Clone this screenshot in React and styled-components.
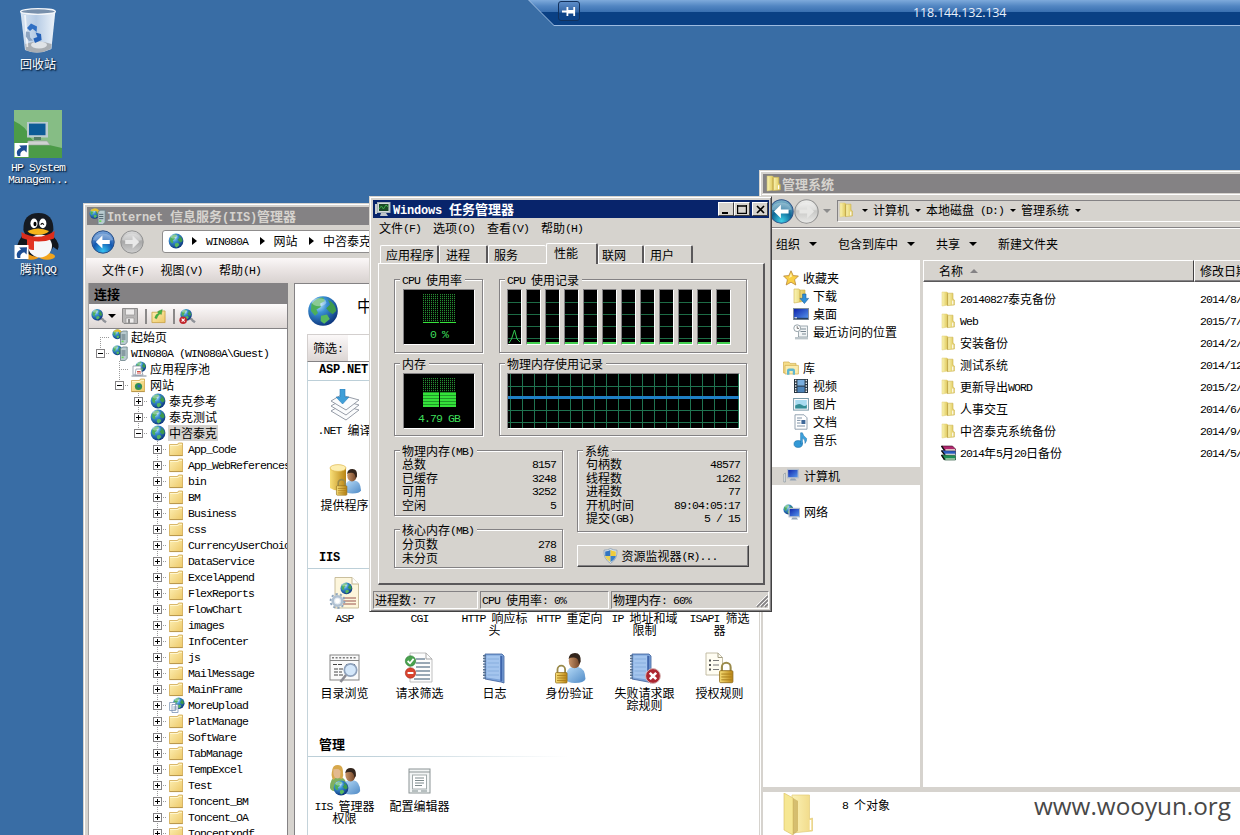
import React from "react";
import styled, { createGlobalStyle } from "styled-components";

const FACE = "#d6d3ce";
const GRAY = "#848284";
const CJK = '"Noto Sans CJK SC", sans-serif';

const Global = createGlobalStyle`
  *, *::before, *::after { box-sizing: border-box; }
  html, body { margin: 0; padding: 0; overflow: hidden; }
  body { font: 12px/12px ${CJK}; color: #000; }
  svg { display: block; flex: none; }
`;

/* ---------- text: half-width runs advance 6px, full-width glyphs 12px ---------- */
const Line = styled.span`
  display: block;
  white-space: pre;
  font-size: ${(p) => (p.$bold ? 13 : 12)}px;
  font-weight: ${(p) => (p.$bold ? 700 : 400)};
  line-height: 12px;
`;
const Half = styled.span`
  font-family: "Liberation Mono", monospace;
  font-size: ${(p) => (p.$bold ? 12 : 11.5)}px;
  line-height: 0;
  vertical-align: ${(p) => (p.$bold ? 0 : 1)}px;
  letter-spacing: ${(p) => (p.$bold ? -0.2 : -0.9)}px;
`;
function T({ children, bold }) {
  const parts = String(children).split(/([\x20-\x7e]+)/).filter(Boolean);
  return (
    <Line $bold={bold}>
      {parts.map((p, i) =>
        /^[\x20-\x7e]/.test(p) ? <Half key={i} $bold={bold}>{p}</Half> : p
      )}
    </Line>
  );
}

/* ---------- icons ---------- */
function Defs() {
  return (
    <svg width="0" height="0" style={{ position: "absolute" }}>
      <defs>
        <radialGradient id="sea" cx="35%" cy="28%" r="80%">
          <stop offset="0" stopColor="#c4ecff" />
          <stop offset=".35" stopColor="#3a90d4" />
          <stop offset="1" stopColor="#072c74" />
        </radialGradient>
        <linearGradient id="fold" x1="0" x2="1" y1="0" y2="1">
          <stop offset="0" stopColor="#fdf0b4" />
          <stop offset="1" stopColor="#edc868" />
        </linearGradient>
        <linearGradient id="fold2" x1="0" x2="1">
          <stop offset="0" stopColor="#fbf5b4" />
          <stop offset="1" stopColor="#dcc455" />
        </linearGradient>
        <linearGradient id="big" x1="0" x2="1">
          <stop offset="0" stopColor="#fbf2b6" />
          <stop offset="1" stopColor="#f0d885" />
        </linearGradient>
        <linearGradient id="gold" x1="0" x2="1">
          <stop offset="0" stopColor="#f8df78" />
          <stop offset="1" stopColor="#b98413" />
        </linearGradient>
        <linearGradient id="blueBody" x1="0" x2="1" y2="1">
          <stop offset="0" stopColor="#b8dcf8" />
          <stop offset="1" stopColor="#4f8ac6" />
        </linearGradient>
        <linearGradient id="skin" x1="0" x2="1">
          <stop offset="0" stopColor="#c99468" />
          <stop offset="1" stopColor="#6e4226" />
        </linearGradient>
        <linearGradient id="glass" x1="0" x2="1">
          <stop offset="0" stopColor="#dfeaf6" />
          <stop offset=".45" stopColor="#bcd0e8" />
          <stop offset="1" stopColor="#f6fafe" />
        </linearGradient>
        <radialGradient id="btnBlue" cx="50%" cy="90%" r="90%">
          <stop offset="0" stopColor="#35c3f2" />
          <stop offset=".5" stopColor="#1458b0" />
          <stop offset="1" stopColor="#7ea8dc" />
        </radialGradient>
        <radialGradient id="btnTeal" cx="50%" cy="90%" r="90%">
          <stop offset="0" stopColor="#3fd0e8" />
          <stop offset=".5" stopColor="#0f6695" />
          <stop offset="1" stopColor="#84b6cc" />
        </radialGradient>
        <linearGradient id="btnGray" x2="0" y2="1">
          <stop offset="0" stopColor="#dcdcdc" />
          <stop offset=".5" stopColor="#a9a9a9" />
          <stop offset="1" stopColor="#cfcfcf" />
        </linearGradient>
        <linearGradient id="btnPale" x2="0" y2="1">
          <stop offset="0" stopColor="#f1f1ef" />
          <stop offset=".5" stopColor="#c9c9c7" />
          <stop offset="1" stopColor="#e9e9e7" />
        </linearGradient>
        <linearGradient id="screen" x2="1" y2="1">
          <stop offset="0" stopColor="#0a1fa8" />
          <stop offset="1" stopColor="#5a9cf0" />
        </linearGradient>
      </defs>
    </svg>
  );
}
const GlobeArt = () => (
  <>
    <circle cx="8" cy="8" r="7.4" fill="url(#sea)" />
    <path d="M2.2 4.5Q4.5 1.3 8 1.2L9 3 6.6 4.2 6.9 6 4.7 7.3 5.5 9 4 10.4 2 8Z" fill="#4cae5a" />
    <path d="M10.5 2.2Q14.4 4.5 14.6 8L12.8 9.6 11 8.2 9.6 6.6 11.6 4.8Z" fill="#3d9a4c" />
    <path d="M7 10.4 10 9.8 11.4 12 8.6 14.4 6.8 13Z" fill="#57b85e" />
    <ellipse cx="6" cy="3.6" rx="3.6" ry="2" fill="#fff" opacity=".35" />
  </>
);
const Globe = ({ s = 16 }) => (
  <svg width={s} height={s} viewBox="0 0 16 16"><GlobeArt /></svg>
);
const ServerArt = () => (
  <>
    <path d="M8.5 3.5 11 2h4.2v11.5L13 15.5H8.5z" fill="#b9cbd0" stroke="#6c8189" strokeWidth=".8" />
    <path d="M9.5 6h4M9.5 8h4M9.5 10h4" stroke="#4c626c" strokeWidth=".9" />
    <rect x="9.6" y="11.6" width="2" height="1.6" fill="#6ada58" />
  </>
);
const ServerGlobe = ({ s = 16, gold }) => (
  <svg width={s} height={s} viewBox="0 0 16 16">
    <g transform="scale(.66)"><GlobeArt /></g>
    {gold && <path d="M1 3Q4-1 8 1L11 4 8 5 7 3Q4 2 1 3Z" fill="#e6c02e" />}
    <ServerArt />
  </svg>
);
const Pool = () => (
  <svg width="16" height="16" viewBox="0 0 16 16">
    <g transform="translate(4 0) scale(.72)"><GlobeArt /></g>
    <path d="M2 5h8v9H2z" fill="#fff" stroke="#8a94a4" strokeWidth=".8" />
    <path d="M5 8h5l2 6H4z" fill="#fff" stroke="#8a94a4" strokeWidth=".8" />
    <path d="M6 10.5h3.6M6 12h4" stroke="#d05048" />
    <path d="M.5 15h15" stroke="#7a8494" />
  </svg>
);
const Folder = ({ globe }) => (
  <svg width="15" height="15" viewBox="0 0 15 15">
    <path d="M.5 2.5H8.5L9.5 1H13.5V13.5H.5Z" fill="url(#fold)" stroke="#d0a850" strokeWidth=".8" />
    <path d="M1 3.5H9L10.2 2.4H13" stroke="#fff8d4" fill="none" strokeWidth=".9" />
    <path d="M.5 13.6H13.8" stroke="#b08e42" strokeWidth=".8" />
    {globe && <><circle cx="7.5" cy="8.5" r="3.6" fill="#2f9153" /><circle cx="8" cy="8" r="1.6" fill="#2a66b4" /></>}
  </svg>
);
const AppPage = () => (
  <svg width="16" height="16" viewBox="0 0 16 16">
    <g transform="translate(3.5 0) scale(.78)"><GlobeArt /></g>
    <path d="M.6 5.5h6v8h-6zM3 7.5h6v8H3z" fill="#fff" stroke="#7b93b4" strokeWidth=".8" />
    <path d="M4.4 10h3.4M4.4 12h3.4" stroke="#7b93b4" />
  </svg>
);
const ExFolder = ({ s = 16 }) => (
  <svg width={s} height={s} viewBox="0 0 16 16">
    <path d="M2 1H7L8 2V14L2 15Z" fill="url(#fold2)" stroke="#e0cf74" strokeWidth=".5" />
    <path d="M7.6 2.2H13V8L14.4 9V14L7.6 14.6Z" fill="url(#fold2)" stroke="#cdb552" strokeWidth=".6" />
    <path d="M7.6 2.4V14.6" stroke="#bfa548" strokeWidth=".9" />
    <path d="M12.8 9.6V13.4" stroke="#fff" strokeWidth="1.2" />
  </svg>
);
const BigFolder = () => (
  <svg width="34" height="42" viewBox="0 0 34 42">
    <path d="M9 2H26.5V26L29.5 25V38L9 40Z" fill="url(#big)" stroke="#e2cb7a" strokeWidth=".7" />
    <path d="M1 0 10 5V42L1 37Z" fill="#f6e793" stroke="#d8bd60" strokeWidth=".6" />
    <path d="M10 5 15 8V38L10 42Z" fill="#b8973c" opacity=".55" />
    <path d="M27.5 27V37" stroke="#fff" strokeWidth="1.6" />
  </svg>
);
const NavArrow = ({ s, fill, flip, ring = "#2a4f86", ink = "#fff" }) => (
  <svg width={s} height={s} viewBox="0 0 24 24">
    <circle cx="12" cy="12" r="11.2" fill={fill} stroke={ring} strokeWidth="1" />
    <path d="M2 10A10.5 9.5 0 0 1 22 10Q12 13 2 10" fill="#fff" opacity=".28" />
    <path d="M4.8 12 11.4 5.6V10H18.8V14H11.4V18.4Z" fill={ink} transform={flip ? "matrix(-1 0 0 1 24 0)" : undefined} />
  </svg>
);
const Lock = ({ x = 0, y = 0 }) => (
  <g transform={`translate(${x} ${y})`}>
    <path d="M2.5 8V4.5a3.8 3.8 0 0 1 7.6 0V8" fill="none" stroke="#9a8a4a" strokeWidth="1.8" />
    <rect x=".5" y="7.5" width="11.6" height="10.5" rx="1" fill="url(#gold)" stroke="#8f6a18" strokeWidth=".7" />
    <path d="M2 10.5H11M2 13H11M2 15.5H11" stroke="#a87b1a" strokeWidth=".8" />
  </g>
);
const Man = ({ x = 0, y = 0, shirt = "url(#blueBody)", hair = "#33251c", face = "url(#skin)" }) => (
  <g transform={`translate(${x} ${y})`}>
    <path d="M0 26Q0 15 6 14H12Q19 15 19.5 26Q18 30 9 30 1 30 0 26Z" fill={shirt} />
    <ellipse cx="8.5" cy="8" rx="5.8" ry="7.3" fill={face} />
    <path d="M2.6 6Q3 0 9 0 15.5 0 14.6 9L13 11Q12.4 4.6 8 4.6 4 4.4 2.6 6Z" fill={hair} />
  </g>
);
const Art = ({ children }) => <svg width="32" height="32" viewBox="0 0 32 32">{children}</svg>;
const NetCompile = () => (
  <Art>
    {[22, 17, 12].map((y) => (
      <path key={y} d={`M2 ${y} 12 ${y - 6} 30 ${y - 1} 17 ${y + 9}Z`} fill="#fbfcfd" stroke="#8b929e" strokeWidth=".9" />
    ))}
    <path d="M11 0h5v8h4l-6.4 7L7 8h4z" fill="#3f9fd8" stroke="#2c7cb8" strokeWidth=".6" />
  </Art>
);
const Provider = () => (
  <Art>
    <path d="M1 4V24Q9 29 17 24V4Z" fill="url(#gold)" />
    <ellipse cx="9" cy="4" rx="8" ry="3.4" fill="#fdeeb0" stroke="#d9ac3c" strokeWidth=".6" />
    <g transform="translate(16 5) scale(.82)"><Man /></g>
    <g transform="translate(7 15) scale(.9)"><Lock /></g>
  </Art>
);
const AspIcon = () => (
  <Art>
    <path d="M6 .5H23L29.5 7V31H6Z" fill="#fdf6dc" stroke="#c4b894" strokeWidth=".9" />
    <path d="M23 .5V7H29.5" fill="#fff" stroke="#c4b894" />
    <g transform="translate(11 5) scale(.8)"><GlobeArt /></g>
    <path d="M14 21H27M14 24H27M14 27H27" stroke="#99524c" strokeWidth="1.2" />
    <circle cx="8.5" cy="24" r="4.8" fill="#e3eaf1" stroke="#b0c1d2" strokeWidth="2.6" />
    <circle cx="8.5" cy="24" r="7" fill="none" stroke="#8ba3bc" strokeWidth="1.8" strokeDasharray="2.2 2.2" />
    <circle cx="8.5" cy="24" r="2.4" fill="#fff" />
  </Art>
);
const Browse = () => (
  <Art>
    <rect x="1" y="3" width="29" height="25" fill="#fafafa" stroke="#858585" />
    <path d="M1 8.5H30" stroke="#858585" />
    <path d="M3 5.8H27" stroke="#7a7a7a" strokeWidth="1.6" strokeDasharray="2 1.6" />
    <path d="M4 12.5H14M17 12.5H26M5 17H14M5 20H13M5 23H14" stroke="#454545" strokeWidth="1.2" strokeDasharray="4 1" />
    <circle cx="21.5" cy="18" r="6.2" fill="#d4e7fa" stroke="#8fa2bc" strokeWidth="1.7" />
    <path d="M17 23 11.5 30" stroke="#8c8c94" strokeWidth="2.6" />
  </Art>
);
const FilterIcon = () => (
  <Art>
    <path d="M6 1H22L28 7V30H6Z" fill="#fdfdfd" stroke="#b8b8b8" strokeWidth=".9" />
    <path d="M22 1V7H28" fill="none" stroke="#a5a5a5" />
    <path d="M12 7H21M12 11H26M12 15H26M12 19H26M12 23H26M10 27H26" stroke="#37546e" strokeWidth="1.2" />
    <circle cx="6.5" cy="9" r="5.2" fill="#4aa24e" stroke="#2d7c35" strokeWidth=".6" />
    <path d="M3.6 9 6 11.3 9.6 6.9" stroke="#fff" strokeWidth="1.8" fill="none" />
    <circle cx="6.5" cy="21" r="5.2" fill="#d8432e" stroke="#a52c1e" strokeWidth=".6" />
    <path d="M3.6 21H9.4" stroke="#fff" strokeWidth="2" />
  </Art>
);
const Book = () => (
  <>
    <path d="M6 2H23L25 4V31L22 30 6 27Z" fill="#7ba2d8" stroke="#3c5f9c" strokeWidth=".8" />
    <path d="M7.4 3.4H21V27.4L7.4 25.6Z" fill="#a4c5ee" />
    <path d="M22.3 4V29.4" stroke="#3f65ab" strokeWidth="2" />
    <path d="M8.5 7H20M8.5 11H20M8.5 15H20M8.5 19H20M8.5 23H20" stroke="#87aede" />
    <path d="M5.5 3V27" stroke="#56708f" strokeWidth="3" strokeDasharray="1.4 1.4" />
  </>
);
const LogIcon = () => <Art><Book /></Art>;
const AuthIcon = () => <Art><Man x={12} y={1} /><Lock x={1} y={13} /></Art>;
const FailIcon = () => (
  <Art>
    <g transform="translate(-3 0)"><Book /></g>
    <circle cx="24" cy="24" r="7.4" fill="#ad2630" stroke="#d9b8b8" />
    <path d="M20.8 20.8 27.2 27.2M27.2 20.8 20.8 27.2" stroke="#fff" strokeWidth="2.6" />
  </Art>
);
const RuleIcon = () => (
  <Art>
    <path d="M2 1H14L18.5 5.5V23H2Z" fill="#fffdf2" stroke="#bdb79d" strokeWidth=".9" />
    <path d="M14 1V5.5H18.5" fill="none" stroke="#a39d84" />
    <path d="M5 8.5H7M5 13H7M5 17.5H7" stroke="#555" strokeWidth="2" />
    <path d="M9 8.5H15M9 13H15M9 17.5H15" stroke="#777" strokeWidth="1.2" />
    <g transform="translate(15 10) scale(1.15)"><Lock /></g>
  </Art>
);
const UsersIcon = () => (
  <Art>
    <g transform="translate(1 0) scale(.88)">
      <Man shirt="#7fb060" hair="#d7a84c" face="#e3b98e" />
      <path d="M3 5Q0 12 4 17L6 15Q3 11 4 6ZM12 8Q12 13 10.6 15L14 16Q16 11 14 6Z" fill="#d7a84c" />
    </g>
    <g transform="translate(14 3) scale(.88)"><Man /></g>
    <g transform="translate(4 15)"><GlobeArt /></g>
  </Art>
);
const ConfigIcon = () => (
  <Art>
    <rect x="5" y="4" width="21" height="24" fill="#f2f5f5" stroke="#8b9495" />
    <path d="M5 7H26" stroke="#8b9495" />
    <rect x="8.5" y="10" width="14" height="14" fill="#fff" stroke="#a2abac" />
    <path d="M11 13H20M11 15.5H20M11 18H20M11 20.5H18M8 26H14M17 26H23" stroke="#7d8a8c" />
  </Art>
);
const Shortcut = () => (
  <g>
    <rect x=".5" y="33" width="14" height="14" fill="#fff" />
    <path d="M3.6 46Q.8 40.6 7 37.6L5.2 35.4 13 35.2 12.6 42.4 10.2 40.2Q5.6 41.4 6.4 46Z" fill="#1e4e94" />
  </g>
);
const Bin = () => (
  <svg width="48" height="48" viewBox="0 0 48 48">
    <path d="M6.4 4H41.4L37.4 42Q24 48.6 11 43Z" fill="url(#glass)" opacity=".95" />
    <path d="M11.4 37Q24 32 37.6 37L36.8 42Q24 48.6 11.8 43.2Z" fill="#a9aeb3" />
    <ellipse cx="25" cy="38" rx="8" ry="3.4" fill="#dfe3e7" />
    <ellipse cx="24" cy="4.5" rx="17.4" ry="2.8" fill="#7890ac" stroke="#f3f6fa" strokeWidth="1.3" />
    <path d="M11 8 13.4 40" stroke="#fff" opacity=".7" strokeWidth="1.8" />
    <path d="M13 21 17 16.6 23 19.4 22.6 25 18.6 21.8 16 24Z" fill="#2f6fc4" />
    <path d="M21.6 25.4 27 27 27.6 33 21 36 19.4 31.6 23.4 30Z" fill="#2461b8" />
    <path d="M12 24.5 15.6 25 16.2 30.6 19 33.4 15 34 11.8 29.6Z" fill="#8da4c0" />
  </svg>
);
const HpIcon = () => (
  <svg width="48" height="48" viewBox="0 0 48 48">
    <path d="M0 0H48V48H0Z" fill="#86bd85" />
    <path d="M0 11Q13 17 15 26 20 34 35 35L48 38V48H0Z" fill="#4c9b48" />
    <rect x="13" y="12" width="21" height="15.5" fill="#bccbcf" />
    <rect x="15" y="13.6" width="16.5" height="11.6" fill="#0d5b97" />
    <rect x="20" y="27" width="7" height="3" fill="#567c66" />
    <path d="M14 31H33L36 35H13Z" fill="#cfd2d0" stroke="#98a29c" strokeWidth=".6" />
    <Shortcut />
  </svg>
);
const QqIcon = () => (
  <svg width="48" height="48" viewBox="0 0 48 48">
    <path d="M8 24Q1 34 4 39L12 33ZM39 24Q47 32 43.6 38L35 32Z" fill="#11161c" />
    <ellipse cx="17" cy="44.4" rx="8" ry="3.3" fill="#ee9a16" />
    <ellipse cx="33" cy="44.4" rx="8" ry="3.3" fill="#f3a51c" />
    <ellipse cx="24" cy="30" rx="16" ry="15" fill="#12161c" />
    <path d="M9.4 18Q9 1 24.5 1 39.6 1 39.4 18 37 26 24.5 26 11 26 9.4 18Z" fill="#151a22" />
    <ellipse cx="26" cy="34" rx="12" ry="11.4" fill="#f6f7f8" />
    <path d="M7.4 20Q24 30 40.6 19L40 26.4Q24 33 7.8 26Z" fill="#db2d1c" />
    <path d="M13 27 20 28.4V38Q15 38.4 13 35Z" fill="#e23524" />
    <ellipse cx="20" cy="11.4" rx="3.6" ry="4.8" fill="#fff" />
    <ellipse cx="28.8" cy="11.4" rx="3.6" ry="4.8" fill="#fff" />
    <ellipse cx="21" cy="12" rx="1.5" ry="2.3" />
    <path d="M26.8 12.8Q28.2 10 29.8 12.8" stroke="#111" strokeWidth="1.3" fill="none" />
    <path d="M13.5 19Q24 14 35 19 32 22.8 24.4 22.8 16 22.8 13.5 19Z" fill="#f6b41b" />
    <Shortcut />
  </svg>
);
const Monitor = () => (
  <svg width="16" height="16" viewBox="0 0 16 16">
    <path d="M0 3H2V13H0" fill="#c9cdd0" />
    <rect x="2.5" y="1.5" width="12.5" height="10" fill="#d5dbdc" stroke="#a5b1b6" />
    <rect x="4" y="3" width="9.5" height="7" fill="#1b4a26" />
    <path d="M4 8 6.4 5 8.4 8 11 4 13.4 6" stroke="#3fae4a" fill="none" />
    <path d="M6 12H11L13 15H5Z" fill="#bfc6ca" />
  </svg>
);
const Shield = () => (
  <svg width="15" height="16" viewBox="0 0 15 16">
    <path d="M7.5.6Q10.5 2.2 14 2.2 14.6 11 7.5 15.4.4 11 1 2.2 4.5 2.2 7.5.6Z" fill="#dce5ee" stroke="#7b93ad" strokeWidth=".7" />
    <path d="M7.5 2V8H2.2V3.4Q5 3.3 7.5 2Z" fill="#3274c0" />
    <path d="M7.5 2V8H12.8V3.4Q10 3.3 7.5 2Z" fill="#f0cc3c" />
    <path d="M2.2 8H7.5V14Q3 11.5 2.2 8Z" fill="#e8d156" />
    <path d="M12.8 8H7.5V14Q12 11.5 12.8 8Z" fill="#3a7ec8" />
  </svg>
);
const Star = () => (
  <svg width="16" height="16" viewBox="0 0 16 16">
    <path d="M8 .8 10.2 5.6 15.4 6 11.6 9.8 12.8 15 8 12.2 3.2 15 4.4 9.8.6 6 5.8 5.6Z" fill="#f9cf45" stroke="#b9873a" strokeWidth=".8" />
    <path d="M8 3 9 6.6 6 8Z" fill="#fff3b4" />
  </svg>
);
const Download = () => (
  <svg width="16" height="16" viewBox="0 0 16 16">
    <path d="M1 1H6L7 2V14L1 15ZM7 2H12V13L7 14Z" fill="url(#fold2)" stroke="#cdb04c" strokeWidth=".6" />
    <path d="M9.6 6H13V10.4H15.6L11.4 15.6 7 10.4H9.6Z" fill="#2f8fd8" stroke="#19619e" strokeWidth=".6" />
  </svg>
);
const DesktopIco = () => (
  <svg width="16" height="16" viewBox="0 0 16 16">
    <rect x=".5" y="2.5" width="15" height="11" fill="url(#screen)" stroke="#83909c" />
    <path d="M1 12.5H15" stroke="#26405e" strokeWidth="1.4" />
    <path d="M1.5 11.8H4" stroke="#fff" />
  </svg>
);
const Recent = () => (
  <svg width="16" height="16" viewBox="0 0 16 16">
    <rect x="5.5" y="2" width="9" height="11" fill="#f1f4f6" stroke="#8b98a0" strokeWidth=".8" />
    <path d="M7.5 5H13M7.5 7.5H13M9 10H13" stroke="#7b8993" />
    <circle cx="4.2" cy="4.2" r="3.4" fill="#fff" stroke="#8b98a0" strokeWidth=".9" />
    <path d="M4.2 2.2V4.4H6" stroke="#555" fill="none" strokeWidth=".8" />
    <path d="M2 13H15V15.4H2Z" fill="#bcc5ca" />
  </svg>
);
const Library = () => (
  <svg width="16" height="16" viewBox="0 0 16 16">
    <path d="M.5 2H6L7 3.4H13V13H.5Z" fill="#f5dd8a" stroke="#d1ad4e" strokeWidth=".7" />
    <path d="M2 5.4H15.4V14H2Z" fill="#fbecae" stroke="#d1ad4e" strokeWidth=".7" />
    <path d="M4 14.8V10.5Q4 8.6 6 8.6H10Q12 8.6 12 10.5V14.8H9.8V11H6.4V14.8Z" fill="#5fb6cf" />
  </svg>
);
const Video = () => (
  <svg width="16" height="16" viewBox="0 0 16 16">
    <rect x="1" y="1" width="14" height="14" fill="#26333e" />
    <rect x="4.4" y="1.8" width="7.2" height="5.8" fill="#79aede" />
    <rect x="4.4" y="8.6" width="7.2" height="5.8" fill="#4c83b8" />
    <path d="M2.7 1.8V15M13.3 1.8V15" stroke="#e4ebf0" strokeWidth="1.4" strokeDasharray="1.5 1.2" />
  </svg>
);
const Picture = () => (
  <svg width="16" height="16" viewBox="0 0 16 16">
    <rect x=".6" y="2.5" width="14.8" height="11.6" fill="#fff" stroke="#7a9aa8" />
    <rect x="2.2" y="4" width="11.6" height="8.6" fill="#a8dbf0" />
    <path d="M2.2 9.5Q6 6.6 9 9T13.8 8.4V12.6H2.2Z" fill="#348d94" />
  </svg>
);
const Doc = () => (
  <svg width="16" height="16" viewBox="0 0 16 16">
    <path d="M2 .8H11L14 3.8V15.2H2Z" fill="#fff" stroke="#8898a8" strokeWidth=".9" />
    <path d="M4 4H9M4 6.4H7.5M4 9H7.5M4 12H12" stroke="#7e92a6" />
    <rect x="8.4" y="6" width="4" height="4" fill="#3f6898" />
  </svg>
);
const Music = () => (
  <svg width="16" height="16" viewBox="0 0 16 16">
    <ellipse cx="5.2" cy="12" rx="4.2" ry="3.4" fill="#3399d6" stroke="#1c6ea8" strokeWidth=".6" />
    <path d="M7.6 12V.8H9.4Q10 4 13.6 6.4 14 9 12 11.4 12.6 7.6 9.4 6V12Z" fill="#3ea2dc" stroke="#1c6ea8" strokeWidth=".5" />
  </svg>
);
const Computer = ({ net }) => (
  <svg width="17" height="16" viewBox="0 0 17 16">
    {net ? <g transform="scale(.68)"><GlobeArt /></g> : <path d="M.8 6V14H2.4V5Z" fill="#eceff1" stroke="#8b969d" strokeWidth=".7" />}
    <g transform={net ? "translate(1.5 3)" : undefined}>
      <rect x="4.6" y="1.4" width="10.6" height="8.4" fill="url(#screen)" stroke="#b4bfcc" strokeWidth="1.2" />
      <path d="M8 10.4H12L13.6 12.6H6.6Z" fill="#93a3b6" />
    </g>
  </svg>
);
const Rar = () => (
  <svg width="17" height="16" viewBox="0 0 16 16">
    <path d="M1 1H12L15 4V5.4H4Z" fill="#b1276e" stroke="#3c0c25" strokeWidth=".6" />
    <path d="M1 5.6H4L15 6V9.6H4Z" fill="#2b5cc0" stroke="#101f48" strokeWidth=".6" />
    <path d="M1 10H4L15 10.4V15H4Z" fill="#1f8f54" stroke="#0b3c21" strokeWidth=".6" />
    <path d="M1 1 4 5.4M1 5.6 4 9.6M1 10 4 14.6" stroke="#111" strokeWidth="1.4" />
    <path d="M5 4.9H14.5M5 9.2H14.5M5 14H14.5" stroke="#f3f1e2" strokeWidth="1.1" />
  </svg>
);
const Pin = () => (
  <svg width="14" height="11" viewBox="0 0 14 11">
    <path d="M0 5.5H5M5.4 1V10M12.2 1V10" stroke="#fff" strokeWidth="1.8" />
    <path d="M5 4H12.6V7.4H5Z" fill="#fff" />
  </svg>
);
const Floppy = () => (
  <svg width="16" height="16" viewBox="0 0 16 16">
    <path d="M.5.5H15.5V15.5H2L.5 14Z" fill="#b8b6b6" stroke="#8c8a8a" />
    <path d="M3.5 1H12.5V7H3.5ZM4 10H12V15H4Z" fill="#eeecec" stroke="#979595" strokeWidth=".7" />
    <path d="M6 11H8V15H6Z" fill="#8f8d8d" />
  </svg>
);
const UpFolder = () => (
  <svg width="15" height="16" viewBox="0 0 16 16">
    <path d="M1 4H7L8.5 2.6H15V15H1Z" fill="url(#fold)" stroke="#c79d3c" strokeWidth=".8" />
    <path d="M4 10Q5 6 8 5.4L7 3.4 12 1 11 6.4 9.6 5.6Q7 7 6 11Z" fill="#46b443" stroke="#2b8430" strokeWidth=".4" />
  </svg>
);
const ConnectIco = ({ cut }) => (
  <svg width="17" height="17" viewBox="0 0 18 17">
    <path d="M8 12.6Q12.6 9 14.6 13L17 14.6" stroke="#8f9298" strokeWidth="2.6" fill="none" />
    <g transform="translate(1 0) scale(.82)"><GlobeArt /></g>
    {cut && <><circle cx="4.4" cy="12.4" r="4" fill="#c1272d" /><path d="M2.8 10.8 6 14M6 10.8 2.8 14" stroke="#fff" strokeWidth="1.2" /></>}
  </svg>
);

/* ---------- desktop ---------- */
const Desktop = styled.div`
  position: relative;
  width: 1240px;
  height: 835px;
  overflow: hidden;
  background: #396da5;
`;
const IconColumn = styled.div`
  display: flex;
  flex-direction: column;
  width: 76px;
  padding-top: 7px;
`;
const DesktopItem = styled.div`
  display: flex;
  flex-direction: column;
  align-items: center;
  height: ${(p) => p.$h || 102}px;
  color: #fff;
  text-shadow: 1px 1px 2px #0b2440, 1px 1px 1px #0b2440;
`;
const Caption = styled.div`
  display: flex;
  flex-direction: column;
  align-items: center;
  width: 76px;
  margin-top: 3px;
`;
const RdpEdge = styled.div`
  position: absolute;
  top: 0;
  left: 528px;
  right: 0;
  height: 26px;
  background: #9dbbe0;
  clip-path: polygon(0 0, 100% 0, 100% 100%, 26px 100%);
`;
const RdpBar = styled.div`
  display: flex;
  align-items: flex-start;
  height: 25px;
  padding: 1px 0 0 30px;
  background: linear-gradient(#7eaadb 0, #5286c2 6px, #396fb0 12px, #0a4084 12px, #0a4084 100%);
  clip-path: polygon(1px 0, 100% 0, 100% 100%, 26px 100%);
`;
const PinButton = styled.div`
  display: flex;
  align-items: center;
  justify-content: center;
  width: 22px;
  height: 20px;
  border: 1px solid #12315c;
  border-radius: 3px;
  background: linear-gradient(#5d8dc8 0, #3265a5 10px, #0d4388 11px);
`;
const Address = styled.div`
  margin-left: 333px;
  font: 12.5px/24px "Open Sans", sans-serif;
  letter-spacing: -0.15px;
  color: #e6eefa;
`;

/* ---------- window chrome ---------- */
const Frame = styled.section`
  position: absolute;
  left: ${(p) => p.$x}px;
  top: ${(p) => p.$y}px;
  width: ${(p) => p.$w}px;
  height: ${(p) => p.$h}px;
  display: flex;
  flex-direction: column;
  padding: 2px;
  border: 1px solid;
  border-color: #d6d3ce #424142 #424142 #d6d3ce;
  box-shadow: inset 1px 1px 0 #fff, inset -1px -1px 0 ${GRAY};
  background: ${FACE};
  overflow: hidden;
`;
const Title = styled.header`
  display: flex;
  align-items: center;
  flex: none;
  height: ${(p) => p.$h || 18}px;
  margin: 1px 0 0 1px;
  padding-left: 2px;
  gap: ${(p) => p.$gap}px;
  background: ${(p) => (p.$active ? "#08246b" : GRAY)};
  color: ${(p) => (p.$active ? "#fff" : "#d6d3ce")};
`;
const CaptionButtons = styled.div`
  display: flex;
  margin: 0 1px 0 auto;
  > :last-child { margin-left: 2px; }
`;
const CaptionButton = styled.div`
  display: grid;
  place-items: center;
  width: 16px;
  height: 14px;
  background: ${FACE};
  border: 1px solid;
  border-color: #fff #424142 #424142 #fff;
`;

/* ---------- IIS manager ---------- */
const IisNav = styled.div`
  display: flex;
  align-items: center;
  flex: none;
  height: 33px;
  padding-left: 5px;
`;
const NavPair = styled.div`
  display: flex;
  gap: 5px;
  width: 71px;
`;
const CrumbBox = styled.div`
  display: flex;
  align-items: center;
  flex: 1;
  height: 23px;
  padding: 0 0 2px 5px;
  background: #fff;
  border: 1px solid #8f8d8d;
  border-radius: 3px;
  > i { margin: 0 9px 0 11.5px; }
  > svg + i { margin-left: 8px; }
`;
const Right = styled.i`
  width: 0;
  height: 0;
  border: 4px solid transparent;
  border-left: 5px solid #000;
  border-right: 0;
`;
const Down = styled.i`
  flex: none;
  width: 0;
  height: 0;
  border: ${(p) => p.$s || 4}px solid transparent;
  border-top-color: ${(p) => p.$c || "#000"};
  border-bottom: 0;
`;
const Menu = styled.nav`
  display: flex;
  align-items: center;
  flex: none;
  gap: ${(p) => p.$gap || 16.5}px;
  height: ${(p) => p.$h || 25}px;
  padding: 0 0 1px ${(p) => p.$pl || 16}px;
  background: ${(p) => (p.$plain ? "none" : "linear-gradient(#fbf8f8, #e9e3e2 50%, #d8d2d0)")};
`;
const IisBody = styled.div`
  display: flex;
  flex: 1;
  min-height: 0;
  padding-left: 2px;
`;
const Connections = styled.aside`
  display: flex;
  flex-direction: column;
  flex: none;
  width: 200px;
  border-right: 1px solid ${GRAY};
  border-left: 1px solid #a5a3a3;
  background: #fff;
`;
const PaneHead = styled.div`
  display: flex;
  align-items: center;
  flex: none;
  height: 21px;
  padding-left: 5px;
  background: ${GRAY};
`;
const Tools = styled.div`
  display: flex;
  align-items: center;
  flex: none;
  height: 25px;
  padding-left: 1px;
  background: linear-gradient(#fdfbfb, #ece6e5 55%, #dcd6d4);
  border-bottom: 1px solid ${GRAY};
  > i:first-of-type { margin: 0 6px 0 1px; }
`;
const ToolSep = styled.i`
  width: 2px;
  height: 15px;
  background: #8b8989;
  margin: 0 4px 0 7px;
`;
const Tree = styled.div`
  flex: 1;
  padding-left: 2px;
  overflow: hidden;
`;
const TreeRow = styled.div`
  display: flex;
  align-items: center;
  height: 16px;
  padding-left: ${(p) => p.$k * 19}px;
`;
const dots = (dir) => `repeating-linear-gradient(${dir}, #9a9a9a 0 1px, transparent 1px 2px)`;
const Branch = styled.span`
  display: grid;
  place-items: center;
  flex: none;
  width: 19px;
  height: 16px;
  margin-right: 2px;
  background-repeat: no-repeat;
  background-image: ${dots("180deg")}, ${dots("90deg")};
  background-position: 9px ${(p) => (p.$v === "down" ? 8 : 0)}px, 9px 8px;
  background-size: 1px ${(p) => (p.$v === "full" ? 16 : 8)}px, 10px 1px;
`;
const Toggle = styled.span`
  display: grid;
  place-items: center;
  width: 9px;
  height: 9px;
  border: 1px solid ${GRAY};
  background:
    linear-gradient(#000, #000) center / 5px 1px no-repeat,
    ${(p) => (p.$open ? "" : "linear-gradient(#000, #000) center / 1px 5px no-repeat,")}
    #fff;
`;
const TreeIcon = styled.span`
  display: flex;
  flex: none;
  width: 18px;
`;
const TreeLabel = styled.span`
  display: flex;
  align-items: center;
  flex: none;
  height: 16px;
  padding: 0 1px;
  background: ${(p) => (p.$on ? "#d6d3ce" : "none")};
`;
const Features = styled.main`
  flex: 1;
  margin-left: 6px;
  padding-left: 12px;
  background: #fff;
  border-left: 1px solid ${GRAY};
  border-top: 1px solid ${GRAY};
`;
const SiteHead = styled.div`
  display: flex;
  height: 50px;
  padding: 11px 0 0 0;
`;
const SiteName = styled.span`
  margin: 1px 0 0 18px;
  font-size: 16px;
  line-height: 18px;
`;
const FilterBar = styled.div`
  display: flex;
  height: 28px;
  border: 1px solid #d3cfce;
  border-bottom: 1px solid ${GRAY};
`;
const FilterLabel = styled.div`
  display: flex;
  align-items: center;
  width: 40px;
  padding-left: 5px;
  background: linear-gradient(#fbf8f8, #dcd6d4);
`;
const FeatureList = styled.div`
  border-left: 1px solid #c4d3da;
  height: 500px;
`;
const GroupHead = styled.div`
  display: flex;
  align-items: flex-end;
  height: ${(p) => p.$h}px;
  padding: 0 0 6px 11px;
  border-bottom: 1px solid;
  border-image: linear-gradient(90deg, #bccfd8 0, #bccfd8 50px, #fff 260px) 1;
`;
const FeatureGrid = styled.div`
  display: grid;
  grid-template-columns: repeat(6, 75px);
  grid-auto-rows: 75px;
  height: ${(p) => p.$h || 150}px;
  margin-left: -1px;
`;
const Feature = styled.div`
  display: flex;
  flex-direction: column;
  align-items: center;
  grid-column-start: ${(p) => (p.$first ? 1 : "auto")};
  padding-top: 8px;
  width: 75px;
`;
const FeatureIcon = styled.div`
  height: 32px;
  margin-bottom: 3px;
`;

const TREE = [
  { k: 0, v: "down", icon: <ServerGlobe gold />, label: "起始页" },
  { k: 0, v: "up", open: true, icon: <ServerGlobe />, label: "WIN080A (WIN080A\\Guest)" },
  { k: 1, v: "full", icon: <Pool />, label: "应用程序池" },
  { k: 1, v: "up", open: true, icon: <Folder globe />, label: "网站" },
  { k: 2, v: "full", open: false, icon: <Globe />, label: "泰克参考" },
  { k: 2, v: "full", open: false, icon: <Globe />, label: "泰克测试" },
  { k: 2, v: "up", open: true, icon: <Globe />, label: "中咨泰克", on: true },
  ...[
    "App_Code", "App_WebReferences", "bin", "BM", "Business", "css", "CurrencyUserChoice",
    "DataService", "ExcelAppend", "FlexReports", "FlowChart", "images", "InfoCenter", "js",
    "MailMessage", "MainFrame", "MoreUpload", "PlatManage", "SoftWare", "TabManage",
    "TempExcel", "Test", "Toncent_BM", "Toncent_OA", "Toncentxpdf",
  ].map((label) => ({
    k: 3, v: "full", open: false, label,
    icon: label === "MoreUpload" ? <AppPage /> : <Folder />,
  })),
];

function FeatureItem({ icon, lines, first }) {
  return (
    <Feature $first={first}>
      <FeatureIcon>{icon}</FeatureIcon>
      {lines.map((l) => <T key={l}>{l}</T>)}
    </Feature>
  );
}

function IisWindow() {
  return (
    <Frame $x={83} $y={203} $w={690} $h={700}>
      <Title $gap={1}>
        <ServerGlobe s={17} gold />
        <T bold>Internet 信息服务(IIS)管理器</T>
      </Title>
      <IisNav>
        <NavPair>
          <NavArrow s={24} fill="url(#btnBlue)" />
          <NavArrow s={24} fill="url(#btnGray)" flip ring="#929292" ink="#e8e8e8" />
        </NavPair>
        <CrumbBox>
          <Globe />
          <Right /><T>WIN080A</T>
          <Right /><T>网站</T>
          <Right /><T>中咨泰克</T>
        </CrumbBox>
      </IisNav>
      <Menu><T>文件(F)</T><T>视图(V)</T><T>帮助(H)</T></Menu>
      <IisBody>
        <Connections>
          <PaneHead><T bold>连接</T></PaneHead>
          <Tools>
            <ConnectIco /><Down />
            <Floppy /><ToolSep /><UpFolder /><ToolSep /><ConnectIco cut />
          </Tools>
          <Tree>
            {TREE.map((r) => (
              <TreeRow key={r.label} $k={r.k}>
                <Branch $v={r.v}>{r.open !== undefined && <Toggle $open={r.open} />}</Branch>
                <TreeIcon>{r.icon}</TreeIcon>
                <TreeLabel $on={r.on}><T>{r.label}</T></TreeLabel>
              </TreeRow>
            ))}
          </Tree>
        </Connections>
        <Features>
          <SiteHead><Globe s={32} /><SiteName>中咨泰克</SiteName></SiteHead>
          <FilterBar><FilterLabel><T>筛选:</T></FilterLabel></FilterBar>
          <FeatureList>
            <GroupHead $h={19}><T bold>ASP.NET</T></GroupHead>
            <FeatureGrid>
              <FeatureItem icon={<NetCompile />} lines={[".NET 编译"]} />
              <FeatureItem first icon={<Provider />} lines={["提供程序"]} />
            </FeatureGrid>
            <GroupHead $h={38}><T bold>IIS</T></GroupHead>
            <FeatureGrid>
              <FeatureItem icon={<AspIcon />} lines={["ASP"]} />
              <FeatureItem lines={["CGI"]} />
              <FeatureItem lines={["HTTP 响应标", "头"]} />
              <FeatureItem lines={["HTTP 重定向"]} />
              <FeatureItem lines={["IP 地址和域", "限制"]} />
              <FeatureItem lines={["ISAPI 筛选", "器"]} />
              <FeatureItem icon={<Browse />} lines={["目录浏览"]} />
              <FeatureItem icon={<FilterIcon />} lines={["请求筛选"]} />
              <FeatureItem icon={<LogIcon />} lines={["日志"]} />
              <FeatureItem icon={<AuthIcon />} lines={["身份验证"]} />
              <FeatureItem icon={<FailIcon />} lines={["失败请求跟", "踪规则"]} />
              <FeatureItem icon={<RuleIcon />} lines={["授权规则"]} />
            </FeatureGrid>
            <GroupHead $h={38}><T bold>管理</T></GroupHead>
            <FeatureGrid $h={79}>
              <FeatureItem icon={<UsersIcon />} lines={["IIS 管理器", "权限"]} />
              <FeatureItem icon={<ConfigIcon />} lines={["配置编辑器"]} />
            </FeatureGrid>
          </FeatureList>
        </Features>
      </IisBody>
    </Frame>
  );
}

/* ---------- explorer ---------- */
const ExNav = styled.div`
  display: flex;
  align-items: center;
  flex: none;
  height: 34px;
  margin-top: 1px;
  padding-left: 7px;
  border-top: 1px solid #fff;
  border-bottom: 1px solid ${GRAY};
  > i { margin-left: 4px; }
`;
const ExAddress = styled.div`
  display: flex;
  align-items: center;
  flex: 1;
  height: 22px;
  margin-left: 6px;
  padding-bottom: 2px;
  border: 1px solid;
  border-color: ${GRAY} #fff #fff ${GRAY};
  > i { margin: 0 5px 0 6px; }
  > svg + i { margin-left: 8px; }
`;
const ExTools = styled.div`
  display: flex;
  align-items: center;
  flex: none;
  height: 31px;
  padding-left: 14px;
  border-top: 1px solid #fff;
  > i { margin: 0 21px 0 9px; }
`;
const ExBody = styled.div`
  display: flex;
  flex: none;
  height: 527px;
  margin: 1px 0 0 1px;
`;
const Places = styled.aside`
  flex: none;
  width: 157px;
  padding-top: 9px;
  background: #fff;
`;
const Place = styled.div`
  display: flex;
  align-items: center;
  gap: 4px;
  height: 18px;
  margin-top: ${(p) => p.$gap || 0}px;
  padding-left: ${(p) => (p.$sub ? 30 : 20)}px;
  background: ${(p) => (p.$on ? FACE : "none")};
`;
const FilePane = styled.div`
  flex: 1;
  min-width: 0;
  margin-left: 3px;
  background: #fff;
`;
const Columns = styled.div`
  display: flex;
  height: 22px;
  background: ${FACE};
`;
const Column = styled.div`
  display: flex;
  align-items: center;
  flex: none;
  gap: 5px;
  width: ${(p) => p.$w}px;
  padding-left: ${(p) => p.$pl}px;
  border: 1px solid;
  border-color: #fff #424142 #5a585a #fff;
  box-shadow: inset 0 -1px 0 ${GRAY};
`;
const Up = styled.i`
  border: 4px solid transparent;
  border-bottom-color: ${GRAY};
  border-top: 0;
  margin-left: 2px;
`;
const Files = styled.div`
  padding-top: 6px;
`;
const FileRow = styled.div`
  display: grid;
  grid-template-columns: 20px 240px 80px;
  align-items: center;
  height: 22px;
  padding-left: 17px;
`;
const Details = styled.footer`
  display: flex;
  flex: 1;
  margin-left: 1px;
  padding: 1px 0 0 20px;
  background: #fff;
  border-top: 5px solid ${FACE};
  > span { margin: 6px 0 0 25px; }
`;
const FILES = [
  ["20140827泰克备份", "2014/8/27"], ["Web", "2015/7/1"], ["安装备份", "2014/2/1"],
  ["测试系统", "2014/12/1"], ["更新导出WORD", "2015/2/1"], ["人事交互", "2014/6/1"],
  ["中咨泰克系统备份", "2014/9/1"], ["2014年5月20日备份", "2014/5/20"],
];
function Explorer() {
  return (
    <Frame $x={759} $y={170} $w={540} $h={720}>
      <Title $h={19} $gap={0}><ExFolder s={17} /><T bold>管理系统</T></Title>
      <ExNav>
        <NavArrow s={25} fill="url(#btnTeal)" />
        <NavArrow s={25} fill="url(#btnPale)" flip ring="#8f8f8f" ink="#e6e6e4" />
        <Down $s={4} $c="#8c8c8c" />
        <ExAddress>
          <ExFolder />
          <Down $s={3} /><T>计算机</T>
          <Down $s={3} /><T>本地磁盘 (D:)</T>
          <Down $s={3} /><T>管理系统</T><Down $s={3} />
        </ExAddress>
      </ExNav>
      <ExTools>
        <T>组织</T><Down /><T>包含到库中</T><Down /><T>共享</T><Down /><T>新建文件夹</T>
      </ExTools>
      <ExBody>
        <Places>
          <Place><Star /><T>收藏夹</T></Place>
          <Place $sub><Download /><T>下载</T></Place>
          <Place $sub><DesktopIco /><T>桌面</T></Place>
          <Place $sub><Recent /><T>最近访问的位置</T></Place>
          <Place $gap={18}><Library /><T>库</T></Place>
          <Place $sub><Video /><T>视频</T></Place>
          <Place $sub><Picture /><T>图片</T></Place>
          <Place $sub><Doc /><T>文档</T></Place>
          <Place $sub><Music /><T>音乐</T></Place>
          <Place $gap={18} $on><Computer /><T>计算机</T></Place>
          <Place $gap={18}><Computer net /><T>网络</T></Place>
        </Places>
        <FilePane>
          <Columns>
            <Column $w={271} $pl={15}><T>名称</T><Up /></Column>
            <Column $w={120} $pl={5}><T>修改日期</T></Column>
          </Columns>
          <Files>
            {FILES.map(([n, d], i) => (
              <FileRow key={n}>{i === 7 ? <Rar /> : <ExFolder />}<T>{n}</T><T>{d}</T></FileRow>
            ))}
          </Files>
        </FilePane>
      </ExBody>
      <Details><BigFolder /><T>8 个对象</T></Details>
    </Frame>
  );
}

/* ---------- task manager ---------- */
const Tabs = styled.div`
  display: flex;
  align-items: flex-end;
  flex: none;
  height: 24px;
  padding-left: 8px;
`;
const Tab = styled.div`
  display: flex;
  align-items: center;
  width: ${(p) => p.$w}px;
  height: ${(p) => (p.$on ? 21 : 18)}px;
  padding: 0 0 ${(p) => (p.$on ? 3 : 0)}px ${(p) => p.$pl || 5}px;
  margin-bottom: ${(p) => (p.$on ? -1 : 0)}px;
  position: relative;
  z-index: ${(p) => (p.$on ? 2 : 0)};
  background: ${FACE};
  border: 1px solid #fff;
  border-bottom: 0;
  border-radius: 2px 2px 0 0;
  border-right: ${(p) => (p.$flat ? 0 : "2px solid #5a585a")};
`;
const Panel = styled.div`
  display: flex;
  flex-direction: column;
  flex: none;
  width: 387px;
  height: 322px;
  margin-left: 6px;
  padding: 15px 0 0 15px;
  border: 1px solid #fff;
  border-right: 2px solid #5a585a;
  border-bottom: 2px solid #5a585a;
`;
const Row = styled.div`
  display: flex;
  gap: ${(p) => p.$gap}px;
  margin-bottom: ${(p) => p.$mb || 0}px;
`;
const Stack = styled.div`
  display: flex;
  flex-direction: column;
  gap: 13px;
`;
const Box = styled.div`
  position: relative;
  width: ${(p) => p.$w}px;
  height: ${(p) => p.$h}px;
  padding: ${(p) => p.$pad || "9px 0 0 8px"};
  border: 1px solid ${GRAY};
  box-shadow: 1px 1px 0 #fff, inset 1px 1px 0 #fff;
`;
const Legend = styled.div`
  position: absolute;
  top: -6px;
  left: 5px;
  height: 12px;
  padding: 0 3px 0 2px;
  background: ${FACE};
`;
const Sunken = styled.div`
  display: flex;
  flex-direction: column;
  align-items: center;
  justify-content: space-between;
  width: ${(p) => p.$w}px;
  height: 56px;
  background: #000;
  border: 1px solid;
  border-color: ${GRAY} #fff #fff ${GRAY};
  color: #3ede5a;
  overflow: hidden;
  > span { margin-bottom: 4px; }
`;
const Meter = styled.div`
  display: flex;
  gap: 1px;
  margin-top: 4px;
  width: 33px;
  height: 29px;
`;
const MeterCol = styled.div`
  flex: 1;
  background:
    repeating-linear-gradient(0deg, #35e23a 0 2px, #1f9a28 2px 3px) bottom / 100% ${(p) => p.$fill}px no-repeat,
    repeating-linear-gradient(90deg, transparent 0 1px, #000 1px 2px),
    repeating-linear-gradient(0deg, #268c32 0 1px, #061c08 1px 2px);
`;
const Core = styled.div`
  width: 15px;
  height: 56px;
  background: #000;
  border: 1px solid;
  border-color: ${GRAY} #fff #fff ${GRAY};
`;
const Stat = styled.div`
  display: flex;
  justify-content: space-between;
  height: 13.5px;
  padding-right: 6px;
`;
const MonitorButton = styled.div`
  display: flex;
  align-items: center;
  justify-content: center;
  gap: 3px;
  width: 172px;
  height: 22px;
  padding-right: 5px;
  border: 1px solid;
  border-color: #fff #424142 #424142 #fff;
  box-shadow: inset -1px -1px 0 ${GRAY};
`;
const Status = styled.footer`
  display: flex;
  gap: 2px;
  height: 18px;
  margin: 6px 0 0 1px;
`;
const StatusPane = styled.div`
  display: flex;
  align-items: center;
  justify-content: space-between;
  width: ${(p) => p.$w}px;
  padding-left: 1px;
  border: 1px solid;
  border-color: ${GRAY} #fff #fff ${GRAY};
`;

const CoreGraph = ({ spike }) => (
  <Core>
    <svg width="13" height="54" viewBox="0 0 13 54" shapeRendering="crispEdges">
      <path d="M0 12.5H13M0 24.5H13M0 36.5H13M0 48.5H13" stroke="#1d6b45" />
      {spike
        ? <path d="M1 53 3.5 49 6.5 40 9 49 12 52" fill="none" stroke="#32c850" shapeRendering="auto" />
        : <path d="M0 53H13" stroke="#43cf50" strokeWidth="2" />}
    </svg>
  </Core>
);
const MemoryGraph = () => (
  <svg width="231" height="54" viewBox="0 0 231 54" shapeRendering="crispEdges">
    {Array.from({ length: 20 }, (_, i) => (
      <path key={i} d={`M${2.5 + i * 12} 0V54`} stroke="#1f7350" />
    ))}
    <path d="M0 12.5H231M0 24.5H231M0 36.5H231M0 48.5H231" stroke="#1f7350" />
    <path d="M0 23.5H231" stroke="#1e7fc4" strokeWidth="3" />
  </svg>
);
const Stats = ({ rows }) => rows.map(([a, b]) => <Stat key={a}><T>{a}</T><T>{b}</T></Stat>);
const Group = ({ title, children, ...rest }) => (
  <Box {...rest}><Legend><T>{title}</T></Legend>{children}</Box>
);

function TaskManager() {
  return (
    <Frame $x={369} $y={196} $w={403} $h={416}>
      <Title $active $gap={2}>
        <Monitor />
        <T bold>Windows 任务管理器</T>
        <CaptionButtons>
          <CaptionButton><svg width="10" height="9"><path d="M1 8H7" stroke="#000" strokeWidth="2" /></svg></CaptionButton>
          <CaptionButton><svg width="10" height="9"><path d="M.5 1H9.5M.5 0V8.5H9.5V0" stroke="#000" strokeWidth="1.4" fill="none" /></svg></CaptionButton>
          <CaptionButton><svg width="9" height="9"><path d="M1 1 8 8M8 1 1 8" stroke="#000" strokeWidth="1.7" /></svg></CaptionButton>
        </CaptionButtons>
      </Title>
      <Menu $plain $gap={12} $h={21} $pl={7}>
        <T>文件(F)</T><T>选项(O)</T><T>查看(V)</T><T>帮助(H)</T>
      </Menu>
      <Tabs>
        <Tab $w={59}><T>应用程序</T></Tab>
        <Tab $w={49} $pl={6}><T>进程</T></Tab>
        <Tab $w={58} $flat><T>服务</T></Tab>
        <Tab $w={52} $on $pl={7}><T>性能</T></Tab>
        <Tab $w={46} $pl={3}><T>联网</T></Tab>
        <Tab $w={49}><T>用户</T></Tab>
      </Tabs>
      <Panel>
        <Row $gap={16} $mb={10}>
          <Group title="CPU 使用率" $w={89} $h={74}>
            <Sunken $w={72}>
              <Meter><MeterCol $fill={1} /><MeterCol $fill={1} /></Meter>
              <T>0 %</T>
            </Sunken>
          </Group>
          <Group title="CPU 使用记录" $w={248} $h={74} $pad="9px 0 0 7px">
            <Row $gap={4}>{Array.from({ length: 12 }, (_, i) => <CoreGraph key={i} spike={i === 0} />)}</Row>
          </Group>
        </Row>
        <Row $gap={16} $mb={14}>
          <Group title="内存" $w={89} $h={73}>
            <Sunken $w={72}>
              <Meter><MeterCol $fill={15} /><MeterCol $fill={15} /></Meter>
              <T>4.79 GB</T>
            </Sunken>
          </Group>
          <Group title="物理内存使用记录" $w={248} $h={73} $pad="9px 0 0 7px">
            <Sunken $w={233}><MemoryGraph /></Sunken>
          </Group>
        </Row>
        <Row $gap={14}>
          <Stack>
            <Group title="物理内存(MB)" $w={169} $h={66} $pad="7px 0 0 7px">
              <Stats rows={[["总数", "8157"], ["已缓存", "3248"], ["可用", "3252"], ["空闲", "5"]]} />
            </Group>
            <Group title="核心内存(MB)" $w={169} $h={39} $pad="8px 0 0 7px">
              <Stats rows={[["分页数", "278"], ["未分页", "88"]]} />
            </Group>
          </Stack>
          <Stack>
            <Group title="系统" $w={170} $h={82} $pad="7px 0 0 8px">
              <Stats rows={[["句柄数", "48577"], ["线程数", "1262"], ["进程数", "77"], ["开机时间", "89:04:05:17"], ["提交(GB)", "5 / 15"]]} />
            </Group>
            <MonitorButton><Shield /><T>资源监视器(R)...</T></MonitorButton>
          </Stack>
        </Row>
      </Panel>
      <Status>
        <StatusPane $w={105}><T>进程数: 77</T></StatusPane>
        <StatusPane $w={129}><T>CPU 使用率: 0%</T></StatusPane>
        <StatusPane $w={158}>
          <T>物理内存: 60%</T>
          <svg width="12" height="16" viewBox="0 0 12 16">
            <path d="M1 15 12 4M5 15 12 8M9 15 12 12" stroke={GRAY} strokeWidth="1.6" />
            <path d="M0 14 11 3M4 14 12 6M8 14 12 10" stroke="#fff" strokeWidth=".8" />
          </svg>
        </StatusPane>
      </Status>
    </Frame>
  );
}

const Watermark = styled.div`
  position: absolute;
  right: 9px;
  bottom: 12px;
  font: 24.3px/34px "Open Sans", sans-serif;
  color: #484848;
`;

export default function App() {
  return (
    <Desktop>
      <Global />
      <Defs />
      <IconColumn>
        <DesktopItem $h={103}><Bin /><Caption><T>回收站</T></Caption></DesktopItem>
        <DesktopItem><HpIcon /><Caption><T>HP System</T><T>Managem...</T></Caption></DesktopItem>
        <DesktopItem><QqIcon /><Caption><T>腾讯QQ</T></Caption></DesktopItem>
      </IconColumn>
      <RdpEdge>
        <RdpBar>
          <PinButton><Pin /></PinButton>
          <Address>118.144.132.134</Address>
        </RdpBar>
      </RdpEdge>
      <IisWindow />
      <Explorer />
      <TaskManager />
      <Watermark>www.wooyun.org</Watermark>
    </Desktop>
  );
}
